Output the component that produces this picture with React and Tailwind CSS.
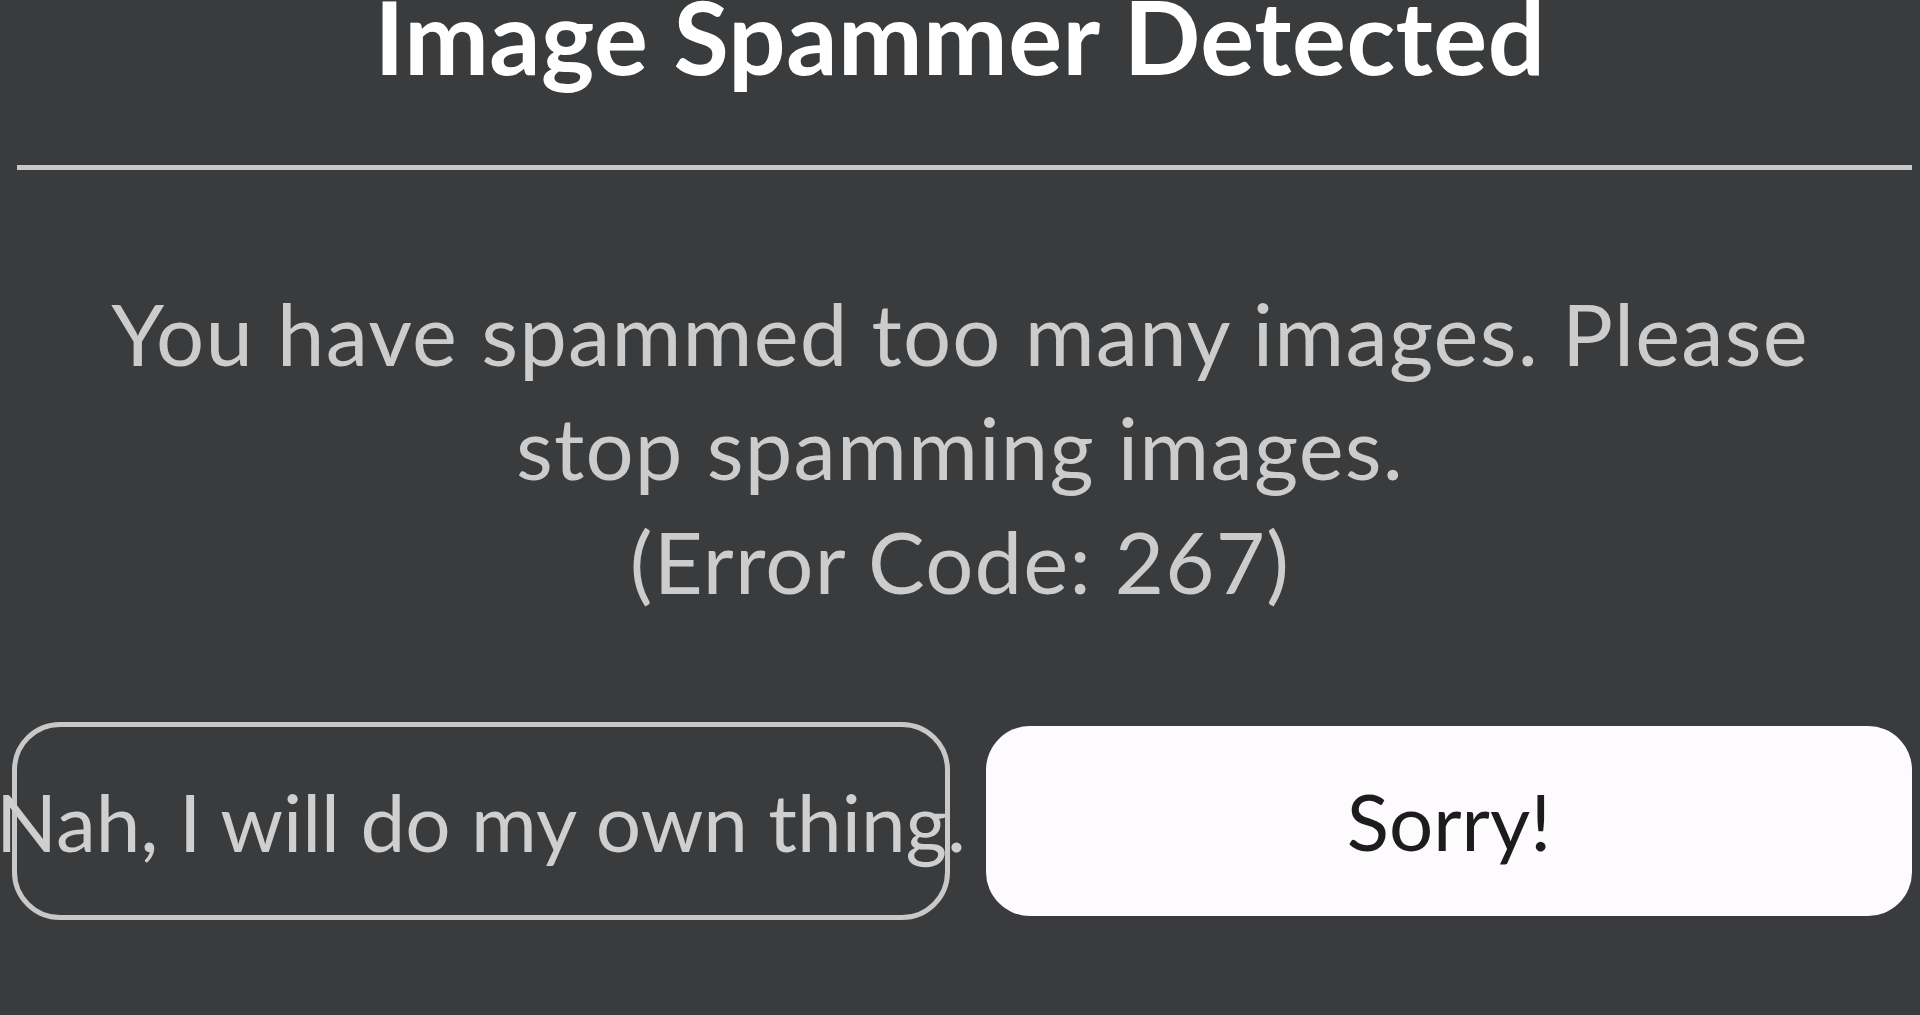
function App() {
  return (
    <div className="w-full h-[1015px] bg-[#393b3d] overflow-hidden flex flex-col font-['Lato',sans-serif]">
      <h1 className="text-center text-white font-bold text-[101px] leading-[72px] tracking-[0.5px] whitespace-nowrap">
        Image Spammer Detected
      </h1>

      <div className="mt-[93px] ml-[17px] mr-[8px] h-[5px] bg-[#c9c9c9]" />

      <p className="mt-[106px] text-center text-[#cdcccc] text-[85px] leading-[114px] tracking-[1.2px] whitespace-nowrap">
        You have spammed too many images. Please
        <br />
        stop spamming images.
        <br />
        (Error Code: 267)
      </p>

      <div className="mt-[104px] pl-[12px] pr-[8px] flex items-center gap-[36px]">
        <button className="w-[938px] h-[198px] shrink-0 rounded-[48px] border-[5px] border-[#c8c8c8] flex items-center justify-center">
          <span className="text-[#cfcfcf] text-[80px] leading-none whitespace-nowrap">
            Nah, I will do my own thing.
          </span>
        </button>

        <button className="flex-1 h-[190px] rounded-[44px] bg-[#fdfbfd] flex items-center justify-center">
          <span className="text-[#1c1c1c] text-[78px] leading-none">
            Sorry!
          </span>
        </button>
      </div>
    </div>
  );
}

export default App;
